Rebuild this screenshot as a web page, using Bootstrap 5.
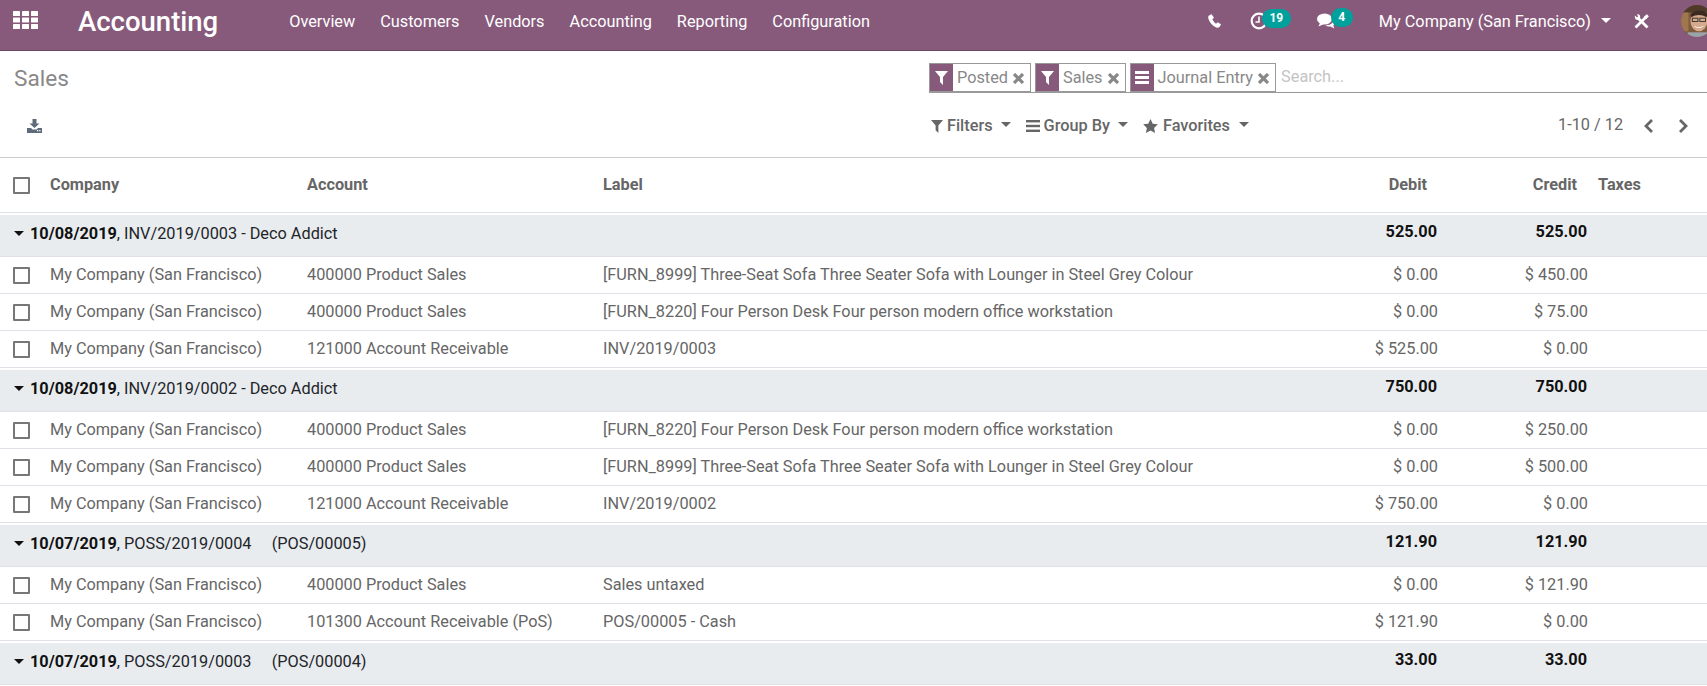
<!DOCTYPE html>
<html lang="en"><head><meta charset="utf-8"><title>Accounting</title>
<link href="https://cdn.jsdelivr.net/npm/bootstrap@5.3.0/dist/css/bootstrap.min.css" rel="stylesheet">
<style>
html,body{height:686px;overflow:hidden;background:#fff}
body{font-family:Roboto,"Liberation Sans",sans-serif;font-size:16.3px;color:#666}
.topbar{height:51px;background:#875a7b;border-bottom:1px solid #6b4a63;color:#fff;padding:0 0 6px 13px}
.topbar a{color:#fff;text-decoration:none}
.grid-ic{margin-bottom:5px}
.appname{font-size:27.5px;font-weight:500;margin-left:40px;margin-right:71px;line-height:1}
.menus{gap:25px}
.badge-odoo{position:absolute;background:#00a09d;color:#fff;font-size:12px;font-weight:700;border-radius:10px;height:19px;line-height:19px;text-align:center}
.icn{position:relative;display:block;line-height:0}
.right-zone{margin-left:auto}
.ic-phone{margin:0 29px 3px 0}
.ic-clock{margin:0 49px 3px 0}
.ic-chat{margin:0 43px 2px 0}
.ic-tools{margin:-1px 32px 0 0}
.ic-avatar{width:26px;height:32px;overflow:hidden;margin-bottom:3px}
.company-link{margin-right:23px}
.ctrl{height:107px;border-bottom:1px solid #ccc;position:relative}
.crumb{font-size:22.6px;color:#888;line-height:1;padding:17px 0 0 14px}
.searchbox{position:absolute;left:929px;right:0;top:12px;height:30px;border-bottom:1px solid #999;display:flex;gap:4px;align-items:stretch}
.facet{border:1px solid #999;border-bottom-width:2px;display:flex;align-items:center;color:#888;height:30px;padding-right:6px;background:#fff;gap:4px;line-height:30px}
.facet-ic{width:23px;height:100%;background:#875a7b;display:flex;align-items:center;justify-content:center}
.facet-x{margin-left:1px;margin-top:2px}
.placeholder-t{color:#c4c4c4;margin-left:1px;line-height:28px}
.tools-l{position:absolute;left:27px;top:68px;line-height:0}
.tools-m{position:absolute;left:931px;top:64px;display:flex;gap:15px;font-weight:500;color:#666;line-height:22px}
.tool-i{display:flex;align-items:center;gap:4px}
.tool-star{gap:5px}
.caret-d{display:inline-block;border-top:5px solid #666;border-left:5px solid transparent;border-right:5px solid transparent;margin-left:4px;margin-top:-4px}
.caret-w{border-top-color:#fff;margin-left:10px;margin-top:-3px}
.pager-o{position:absolute;left:1558px;top:63px;line-height:22px;color:#666}
.pager-b{position:absolute;top:68px;line-height:0}
.pager-prev{left:1643px}
.pager-next{left:1678px}
.ledger{table-layout:fixed;width:100%;border-collapse:separate;border-spacing:0;color:#666}
.ledger th,.ledger td{padding:0 10px;white-space:nowrap;overflow:hidden;background:#fff;vertical-align:middle}
.ledger thead th{height:55px;font-weight:700;border-bottom:1px solid #dee2e6;color:#666}
.ledger tr.rw td{height:37px;border-bottom:1px solid #dee2e6}
.ledger tr.rw td.nm{padding-right:9px}
.ledger tr.gr td{height:44px;background:#e9ecef;color:#212529;border-top:2px solid #fff;border-bottom:1px solid #dee2e6;padding-bottom:3px}
.ledger tr.gr td.nm{font-weight:700;text-align:right;padding-bottom:7px;color:#111}
.gr-date{font-weight:700;color:#111}
.gr-caret{display:inline-block;border-top:5px solid #111;border-left:5px solid transparent;border-right:5px solid transparent;margin:0 6px 2px 4px;vertical-align:middle}
.nm{text-align:right}
th.nm{padding-right:20px !important}
.chk{display:block;width:17px;height:17px;border:2px solid #777;background:#fff;margin-left:3px;border-radius:1px}
.c0{width:40px}.c1{width:257px}.c2{width:296px}.c4{width:150px}.c5{width:150px}.c6{width:110px}
.th-tax{padding-left:1px !important}
.badge-19{left:12px;top:-3px;width:29px}
.badge-4{left:14px;top:-5px;width:22px}
</style></head><body>
<nav class="topbar d-flex align-items-center">
  <a href="#" class="icn grid-ic"><svg width="25" height="18" viewBox="0 0 25 18" fill="#fff"><rect x="0" y="0" width="7" height="5" rx=".6"/><rect x="9" y="0" width="7" height="5" rx=".6"/><rect x="18" y="0" width="7" height="5" rx=".6"/><rect x="0" y="6.500" width="7" height="5" rx=".6"/><rect x="9" y="6.500" width="7" height="5" rx=".6"/><rect x="18" y="6.500" width="7" height="5" rx=".6"/><rect x="0" y="13" width="7" height="5" rx=".6"/><rect x="9" y="13" width="7" height="5" rx=".6"/><rect x="18" y="13" width="7" height="5" rx=".6"/></svg></a>
  <a href="#" class="appname">Accounting</a>
  <div class="d-flex menus">
    <a href="#">Overview</a><a href="#">Customers</a><a href="#">Vendors</a><a href="#">Accounting</a><a href="#">Reporting</a><a href="#">Configuration</a>
  </div>
  <div class="right-zone d-flex align-items-center">
    <span class="icn ic-phone"><svg width="13" height="14" viewBox="0 0 13 14" fill="#fff"><path d="M3 .4 1 1.600C.2 2.300 0 3.500.5 5 1.800 8.700 4.500 11.800 8.200 13.400c1.300.6 2.600.3 3.200-.5l1.400-1.900c.2-.3.1-.7-.2-.9L10 8.500c-.3-.2-.7-.1-.9.1l-.9 1.200C6.600 9 5 7 4.400 5.100l1.200-.9c.2-.2.3-.6.1-.9L3.900.7C3.700.3 3.300.2 3 .4z"/></svg></span>
    <span class="icn ic-clock"><svg width="18" height="18" viewBox="0 0 18 18"><circle cx="9" cy="9" r="7.300" fill="none" stroke="#fff" stroke-width="2.200"/><path d="M9 4.500V10H5.500" fill="none" stroke="#fff" stroke-width="1.600"/></svg><span class="badge-odoo badge-19">19</span></span>
    <span class="icn ic-chat"><svg width="19" height="16" viewBox="0 0 19 16" fill="#fff"><ellipse cx="7.500" cy="6" rx="7.500" ry="5.500"/><path d="M3 10 1.500 13.500 7 11z"/><path d="M16.500 7c1.800 1.500 2 3.500-.2 5.200l1 3.200-3.800-2c-1.900.3-3.800 0-5.200-1 4.200 0 8.200-1.800 8.200-5.400z"/></svg><span class="badge-odoo badge-4">4</span></span>
    <a href="#" class="d-flex align-items-center company-link">My Company (San Francisco)<span class="caret-d caret-w"></span></a>
    <span class="icn ic-tools"><svg width="15" height="15" viewBox="0 0 15 15" fill="none" stroke="#fff"><path d="M4.500 4.500 13.500 13.500" stroke-width="2.800"/><path d="M1.500 13.500 12 3" stroke-width="2.600"/><path d="M10.500 2.500 13 .8 14.300 2 12.500 4.500z" fill="#fff" stroke-width="1"/><path d="M1 1.500 3 3.500 4 2.200 3 .5C5-.2 6.800 1.500 6 4L4 6C1.800 6.500.2 4 1 1.500z" fill="#fff" stroke="none"/></svg></span>
    <span class="icn ic-avatar"><svg width="32" height="32" viewBox="0 0 34 34"><defs><clipPath id="av"><circle cx="17" cy="17" r="17"/></clipPath></defs><g clip-path="url(#av)"><rect width="34" height="34" fill="#7d5b3e"/><rect y="0" width="34" height="8" fill="#4f3a2a"/><rect x="0" y="8" width="8" height="20" fill="#a0764e"/><ellipse cx="19" cy="17" rx="9" ry="11" fill="#d6a88c"/><path d="M10 11c2-6 15-7 18-1l-1 3c-5-3-11-3-16 0z" fill="#3a2a20"/><rect x="12" y="14" width="6" height="3.500" fill="none" stroke="#333"/><rect x="20" y="14" width="6" height="3.500" fill="none" stroke="#333"/><path d="M14 22c3 2 7 2 10 0-1 3-9 3-10 0z" fill="#fff"/><rect x="7" y="29" width="24" height="6" fill="#9aa4aa"/></g></svg></span>
  </div>
</nav>

<section class="ctrl">
  <div class="crumb">Sales</div>
  <div class="searchbox">
    <div class="facet"><span class="facet-ic"><svg width="13" height="14" viewBox="0 0 13 14" fill="#fff"><path d="M0 0h13L8 6v8L5 11V6z"/></svg></span>Posted<svg class="facet-x" width="11" height="11" viewBox="0 0 11 11" stroke="#888" stroke-width="3.200"><path d="M1 1l9 9M10 1l-9 9"/></svg></div>
    <div class="facet"><span class="facet-ic"><svg width="13" height="14" viewBox="0 0 13 14" fill="#fff"><path d="M0 0h13L8 6v8L5 11V6z"/></svg></span>Sales<svg class="facet-x" width="11" height="11" viewBox="0 0 11 11" stroke="#888" stroke-width="3.200"><path d="M1 1l9 9M10 1l-9 9"/></svg></div>
    <div class="facet"><span class="facet-ic"><svg width="14" height="13" viewBox="0 0 14 13" fill="#fff"><rect width="14" height="3"/><rect y="5" width="14" height="3"/><rect y="10" width="14" height="3"/></svg></span>Journal Entry<svg class="facet-x" width="11" height="11" viewBox="0 0 11 11" stroke="#888" stroke-width="3.200"><path d="M1 1l9 9M10 1l-9 9"/></svg></div>
    <span class="placeholder-t">Search...</span>
  </div>
  <div class="tools-l"><svg width="15" height="14" viewBox="0 0 15 14" fill="#5f6b7a"><path d="M5.500 0h4v4.500h3l-5 4.500-5-4.500h3z"/><path fill-rule="evenodd" d="M0 9h4l1.500 1.500h4L11 9h4v5H0zM10 11h1.300v1.300H10zM12.200 11h1.300v1.300h-1.300z"/></svg></div>
  <div class="tools-m">
    <span class="tool-i"><svg width="12" height="13" viewBox="0 0 13 14" fill="#666"><path d="M0 0h13L8 6v8L5 11V6z"/></svg>Filters<span class="caret-d"></span></span>
    <span class="tool-i"><svg width="14" height="12" viewBox="0 0 14 12" fill="#666"><rect width="14" height="2.400"/><rect y="4.800" width="14" height="2.400"/><rect y="9.600" width="14" height="2.400"/></svg>Group By<span class="caret-d"></span></span>
    <span class="tool-i tool-star"><svg width="15" height="14" viewBox="0 0 24 23" fill="#666"><path d="M12 0l3.700 7.800 8.300 1-6.100 5.800 1.600 8.400L12 18.900 4.500 23l1.600-8.400L0 8.800l8.300-1z"/></svg>Favorites<span class="caret-d"></span></span>
  </div>
  <div class="pager-o">1-10 / 12</div>
  <div class="pager-b pager-prev"><svg width="11" height="14" viewBox="0 0 11 14" fill="none" stroke="#666" stroke-width="2.800"><path d="M9 1 3 7l6 6"/></svg></div>
  <div class="pager-b pager-next"><svg width="11" height="14" viewBox="0 0 11 14" fill="none" stroke="#666" stroke-width="2.800"><path d="M2 1l6 6-6 6"/></svg></div>
</section>

<table class="ledger" id="ledger">
  <colgroup><col class="c0"><col class="c1"><col class="c2"><col><col class="c4"><col class="c5"><col class="c6"></colgroup>
  <thead><tr><th><span class="chk"></span></th><th>Company</th><th>Account</th><th>Label</th><th class="nm">Debit</th><th class="nm">Credit</th><th class="th-tax">Taxes</th></tr></thead>
  <tbody>
    <tr class="gr"><td colspan="4"><span class="gr-caret"></span><span class="gr-date">10/08/2019</span>, INV/2019/0003 - Deco Addict</td><td class="nm">525.00</td><td class="nm">525.00</td><td></td></tr>
    <tr class="rw"><td><span class="chk"></span></td><td>My Company (San Francisco)</td><td>400000 Product Sales</td><td>[FURN_8999] Three-Seat Sofa Three Seater Sofa with Lounger in Steel Grey Colour</td><td class="nm">$ 0.00</td><td class="nm">$ 450.00</td><td></td></tr>
    <tr class="rw"><td><span class="chk"></span></td><td>My Company (San Francisco)</td><td>400000 Product Sales</td><td>[FURN_8220] Four Person Desk Four person modern office workstation</td><td class="nm">$ 0.00</td><td class="nm">$ 75.00</td><td></td></tr>
    <tr class="rw"><td><span class="chk"></span></td><td>My Company (San Francisco)</td><td>121000 Account Receivable</td><td>INV/2019/0003</td><td class="nm">$ 525.00</td><td class="nm">$ 0.00</td><td></td></tr>
    <tr class="gr"><td colspan="4"><span class="gr-caret"></span><span class="gr-date">10/08/2019</span>, INV/2019/0002 - Deco Addict</td><td class="nm">750.00</td><td class="nm">750.00</td><td></td></tr>
    <tr class="rw"><td><span class="chk"></span></td><td>My Company (San Francisco)</td><td>400000 Product Sales</td><td>[FURN_8220] Four Person Desk Four person modern office workstation</td><td class="nm">$ 0.00</td><td class="nm">$ 250.00</td><td></td></tr>
    <tr class="rw"><td><span class="chk"></span></td><td>My Company (San Francisco)</td><td>400000 Product Sales</td><td>[FURN_8999] Three-Seat Sofa Three Seater Sofa with Lounger in Steel Grey Colour</td><td class="nm">$ 0.00</td><td class="nm">$ 500.00</td><td></td></tr>
    <tr class="rw"><td><span class="chk"></span></td><td>My Company (San Francisco)</td><td>121000 Account Receivable</td><td>INV/2019/0002</td><td class="nm">$ 750.00</td><td class="nm">$ 0.00</td><td></td></tr>
    <tr class="gr"><td colspan="4"><span class="gr-caret"></span><span class="gr-date">10/07/2019</span>, POSS/2019/0004 &nbsp;&nbsp;&nbsp; (POS/00005)</td><td class="nm">121.90</td><td class="nm">121.90</td><td></td></tr>
    <tr class="rw"><td><span class="chk"></span></td><td>My Company (San Francisco)</td><td>400000 Product Sales</td><td>Sales untaxed</td><td class="nm">$ 0.00</td><td class="nm">$ 121.90</td><td></td></tr>
    <tr class="rw"><td><span class="chk"></span></td><td>My Company (San Francisco)</td><td>101300 Account Receivable (PoS)</td><td>POS/00005 - Cash</td><td class="nm">$ 121.90</td><td class="nm">$ 0.00</td><td></td></tr>
    <tr class="gr"><td colspan="4"><span class="gr-caret"></span><span class="gr-date">10/07/2019</span>, POSS/2019/0003 &nbsp;&nbsp;&nbsp; (POS/00004)</td><td class="nm">33.00</td><td class="nm">33.00</td><td></td></tr>
  </tbody>
</table>
<script src="https://cdn.jsdelivr.net/npm/bootstrap@5.3.0/dist/js/bootstrap.bundle.min.js"></script>
</body></html>
